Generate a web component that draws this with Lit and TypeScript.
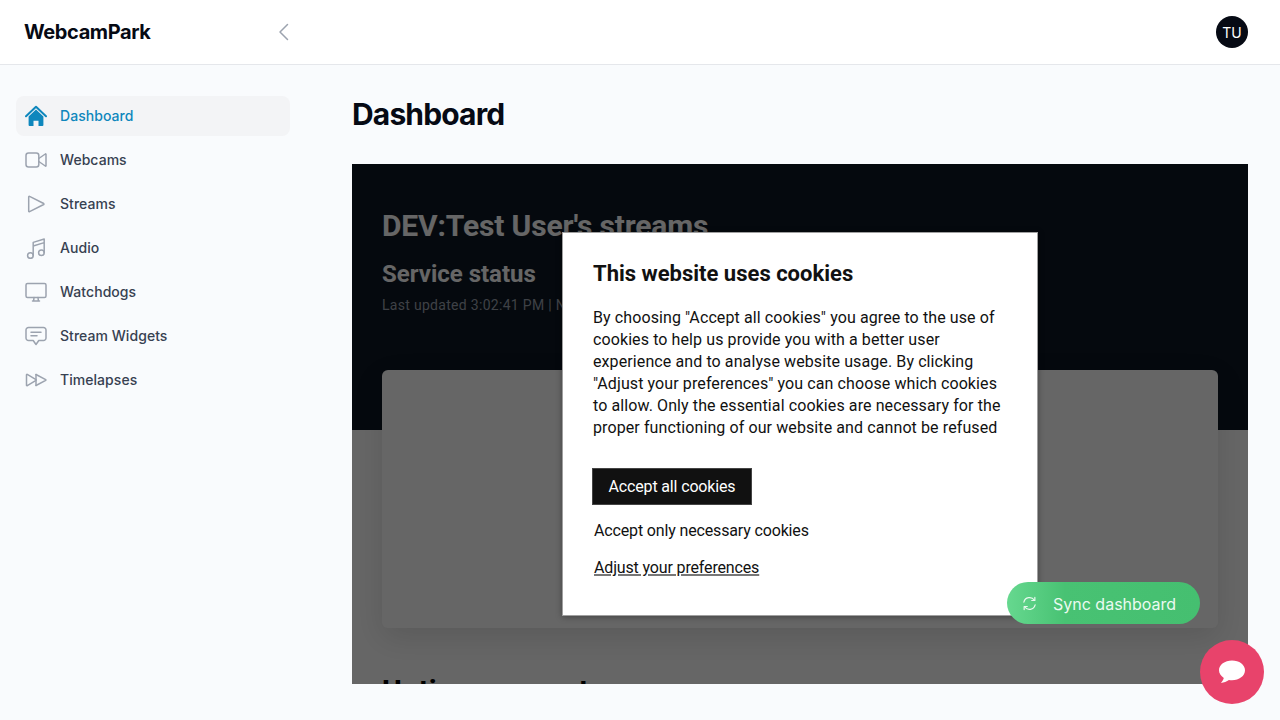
import { LitElement, css, html, svg } from 'lit';
import { customElement } from 'lit/decorators.js';

const navItems = [
  { label: 'Dashboard', active: true, icon: svg`<path d="M1 11.200 11 1.800l10 9.400" fill="none" stroke="#0e87bd" stroke-width="2" stroke-linecap="round" stroke-linejoin="round"/><path d="M3.600 11.500 11 4.600l7.400 6.900v8.600a.9.9 0 0 1-.9.9h-4v-5.300h-5v5.300h-4a.9.9 0 0 1-.9-.9z" fill="#0e87bd" stroke="none"/>` },
  { label: 'Webcams', icon: svg`<rect x="1" y="4" width="12.800" height="14" rx="2.500"/><path d="M13.800 9.500 20.300 5a.4.4 0 0 1 .7.3v11.400a.4.4 0 0 1-.7.3l-6.500-4.500"/>` },
  { label: 'Streams', icon: svg`<path d="M3.700 3.800v14.400a.6.6 0 0 0 .9.500L18.700 11.500a.6.600 0 0 0 0-1L4.600 3.300a.6.600 0 0 0-.9.500z"/>` },
  { label: 'Audio', icon: svg`<path d="M8.200 18.500V5.400L19.200 2v13.800M8.200 9l11-3.400"/><circle cx="5.400" cy="18.500" r="2.800"/><circle cx="16.400" cy="15.800" r="2.800"/>` },
  { label: 'Watchdogs', icon: svg`<rect x="1" y="2.500" width="20" height="14" rx="1.500"/><path d="M7.500 20h7M9 16.500 8.600 20M13 16.500l.4 3.500"/>` },
  { label: 'Stream Widgets', icon: svg`<path d="M3.500 2.500h15A2.500 2.500 0 0 1 21 5v8a2.500 2.500 0 0 1-2.500 2.500h-4.700L11 19.500l-2.800-4H3.500A2.500 2.500 0 0 1 1 13V5a2.500 2.500 0 0 1 2.500-2.500z"/><path d="M6 7.300h10M6 10.700h6"/>` },
  { label: 'Timelapses', icon: svg`<path d="M1.500 5.800v10.400a.5.5 0 0 0 .8.400L11 11.400a.5.500 0 0 0 0-.8L2.300 5.400a.5.500 0 0 0-.8.400z"/><path d="M11 5.500 20.700 10.600a.5.500 0 0 1 0 .8L11 16.500" /><path d="M11 5.500v11"/>` },
];

@customElement('app-root')
export class AppRoot extends LitElement {
  static styles = css`
    :host {
      display: flex;
      flex-direction: column;
      height: 720px;
      overflow: hidden;
      background: #f9fbfd;
      font-family: Inter, 'Liberation Sans', sans-serif;
      position: relative;
    }
    .topbar {
      flex: none;
      height: 65px;
      box-sizing: border-box;
      background: #fff;
      border-bottom: 1px solid #e5e7eb;
      display: flex;
      align-items: center;
      padding: 0 32px 0 24px;
    }
    .brand {
      width: 248px;
      font-size: 20px;
      font-weight: 700;
      letter-spacing: -0.4px;
      color: #060a14;
    }
    .collapse {
      width: 24px;
      height: 24px;
      display: block;
      margin-left: -1px;
    }
    .avatar {
      margin-left: auto;
      width: 32px;
      height: 32px;
      border-radius: 50%;
      background: #060a14;
      color: #fff;
      font-size: 14px;
      display: flex;
      align-items: center;
      justify-content: center;
    }
    .body {
      flex: none;
      height: 619px;
      display: flex;
    }
    .sidebar {
      flex: none;
      width: 352px;
      box-sizing: border-box;
      padding: 31px 62px 0 16px;
      display: flex;
      flex-direction: column;
      gap: 4px;
    }
    .nav-item {
      height: 40px;
      border-radius: 8px;
      display: flex;
      align-items: center;
      gap: 13px;
      padding-left: 9px;
      padding-bottom: 1px;
      box-sizing: border-box;
      font-size: 14px;
      font-weight: 500;
      letter-spacing: 0.05px;
      color: #374151;
    }
    .nav-item.active {
      background: #f3f4f6;
      color: #0e87bd;
    }
    .nav-item svg {
      width: 22px;
      height: 22px;
      flex: none;
      fill: none;
      stroke: #9ca3af;
      stroke-width: 1.500;
      stroke-linecap: round;
      stroke-linejoin: round;
    }
    .main {
      flex: none;
      width: 896px;
      display: flex;
      flex-direction: column;
    }
    h1 {
      margin: 0;
      padding-top: 30px;
      height: 99px;
      box-sizing: border-box;
      font-size: 30px;
      line-height: 38px;
      font-weight: 700;
      letter-spacing: -0.85px;
      color: #060a14;
    }
    .panel {
      position: relative;
      height: 520px;
      overflow: hidden;
      background: #fff;
      font-family: Roboto, sans-serif;
    }
    .hero {
      height: 266px;
      background: #0d1723;
      box-sizing: border-box;
      padding: 43px 30px 0;
      color: #fff;
    }
    .hero h2 {
      margin: 0;
      font-size: 30px;
      line-height: 38px;
      font-weight: 700;
      letter-spacing: -0.15px;
    }
    .hero h3 {
      margin: 13px 0 0;
      font-size: 24px;
      line-height: 32px;
      font-weight: 700;
    }
    .hero p {
      margin: 5px 0 0;
      font-size: 14px;
      line-height: 20px;
      letter-spacing: 0.3px;
      color: #9ca3af;
    }
    .status-card {
      position: absolute;
      left: 30px;
      right: 30px;
      top: 206px;
      height: 258px;
      background: #fff;
      border-radius: 6px;
      box-shadow: 0 10px 30px rgba(0, 0, 0, 0.12);
    }
    .panel h2.uptime {
      position: absolute;
      left: 30px;
      top: 508px;
      margin: 0;
      font-size: 30px;
      line-height: 38px;
      font-weight: 700;
      color: #000;
      white-space: nowrap;
    }
    .dim {
      position: absolute;
      inset: 0;
      background: rgba(0, 0, 0, 0.6);
    }
    .cookie {
      position: absolute;
      left: 210px;
      top: 68px;
      width: 476px;
      height: 384px;
      box-sizing: border-box;
      padding: 26px 30px 0;
      background: #fff;
      border: 1px solid #a0a0a0;
      color: #111;
      box-shadow: 0 1px 6px rgba(0, 0, 0, 0.35);
      font-size: 16px;
      line-height: 22px;
    }
    .cookie h4 {
      margin: 0;
      font-size: 22px;
      line-height: 30px;
      font-weight: 700;
    }
    .cookie p {
      margin: 18px 0 0;
      letter-spacing: 0.1px;
    }
    .accept {
      width: 160px;
      height: 37px;
      box-sizing: border-box;
      margin: 29px 0 0 -1px;
      background: #111;
      color: #fff;
      border: 1px solid #444;
      display: flex;
      align-items: center;
      justify-content: center;
      letter-spacing: -0.15px;
    }
    .link {
      margin-left: 1px;
      display: block;
      letter-spacing: -0.15px;
    }
    .necessary {
      margin-top: 15px;
    }
    .prefs {
      margin-top: 15px;
      text-decoration: underline;
      text-decoration-color: #777;
      text-decoration-thickness: 1.500px;
    }
    .sync {
      position: absolute;
      left: 655px;
      top: 418px;
      width: 193px;
      height: 42px;
      box-sizing: border-box;
      padding-left: 15px;
      padding-top: 1px;
      border-radius: 21px;
      display: flex;
      align-items: center;
      gap: 16px;
      color: #eafaf0;
      font-family: Inter, sans-serif;
      font-size: 16px;
      background: linear-gradient(90deg, #66d88f 0%, #48c273 30%, #45bf70 100%);
    }
    .sync svg {
      width: 15px;
      height: 15px;
      fill: none;
      stroke: #e8f8ee;
      stroke-width: 1.300;
      stroke-linecap: round;
      stroke-linejoin: round;
    }
    .chat {
      position: absolute;
      left: 1200px;
      top: 640px;
      width: 64px;
      height: 64px;
      border-radius: 50%;
      background: #e8436b;
      display: flex;
      align-items: center;
      justify-content: center;
    }
  `;

  render() {
    return html`
      <div class="topbar">
        <div class="brand">WebcamPark</div>
        <svg class="collapse" viewBox="0 0 24 24" fill="none" stroke="#9ca3af" stroke-width="1.500" stroke-linecap="round" stroke-linejoin="round"><path d="M16.500 4.500 9 12l7.500 7.500"/></svg>
        <div class="avatar">TU</div>
      </div>
      <div class="body">
        <nav class="sidebar">
          ${navItems.map(
            (item) => html`<div class="nav-item ${item.active ? 'active' : ''}"><svg viewBox="0 0 22 22">${item.icon}</svg><span>${item.label}</span></div>`
          )}
        </nav>
        <div class="main">
          <h1>Dashboard</h1>
          <div class="panel">
            <div class="hero">
              <h2>DEV:Test User's streams</h2>
              <h3>Service status</h3>
              <p>Last updated 3:02:41 PM | Next update in 30 seconds</p>
            </div>
            <div class="status-card"></div>
            <h2 class="uptime">Uptime percent</h2>
            <div class="dim"></div>
            <div class="cookie">
              <h4>This website uses cookies</h4>
              <p>By choosing "Accept all cookies" you agree to the use of cookies to help us provide you with a better user experience and to analyse website usage. By clicking "Adjust your preferences" you can choose which cookies to allow. Only the essential cookies are necessary for the proper functioning of our website and cannot be refused</p>
              <div class="accept">Accept all cookies</div>
              <div class="link necessary">Accept only necessary cookies</div>
              <div class="link prefs">Adjust your preferences</div>
            </div>
            <div class="sync">
              <svg viewBox="0 0 16 16"><path d="M2 6.500A6.200 6.200 0 0 1 13.200 4.500M14 9.500A6.200 6.200 0 0 1 2.800 11.500"/><path d="M13.700 1.500v3.300h-3.300M2.300 14.500v-3.300h3.300"/></svg>
              <span>Sync dashboard</span>
            </div>
          </div>
        </div>
      </div>
      <div class="chat">
        <svg width="28" height="26" viewBox="0 0 28 26"><path d="M14 1.500C6.800 1.500 1 5.900 1 11.300c0 3.100 1.900 5.800 4.800 7.600-.4 1.700-1.500 3.500-2.900 5 2.900-.1 6-1.500 8-2.900.99.200 2 .3 3.100.3 7.200 0 13-4.400 13-10S21.200 1.500 14 1.500z" fill="#fff"/></svg>
      </div>
    `;
  }
}

declare global {
  interface HTMLElementTagNameMap {
    'app-root': AppRoot;
  }
}
